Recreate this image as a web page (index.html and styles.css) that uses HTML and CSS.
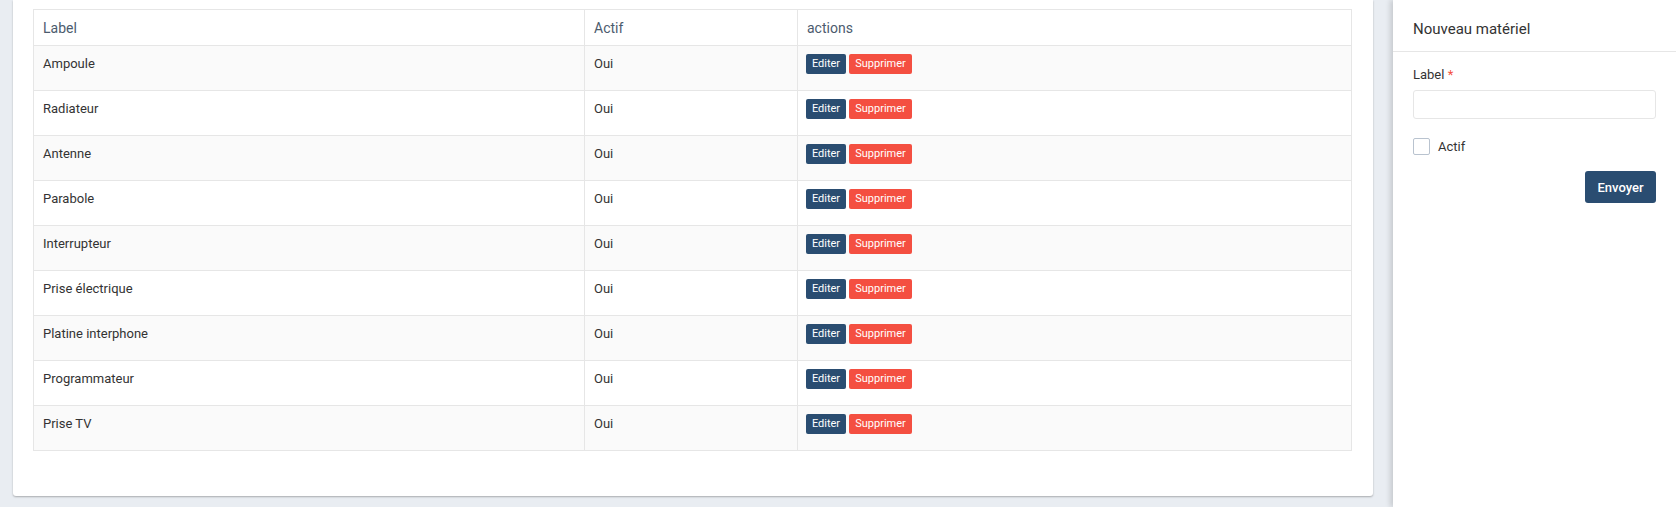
FILE: index.html
```html
<!DOCTYPE html>
<html lang="fr">
<head>
    <meta charset="UTF-8">
    <meta name="viewport" content="width=device-width, initial-scale=1.0">
    <title>Matériels</title>
    <link rel="stylesheet" href="styles.css">
</head>
<body>
    <div class="layout">
        <main class="main">
            <div class="card">
                <table class="list-table">
                    <thead>
                        <tr>
                            <th class="col-label">Label</th>
                            <th class="col-actif">Actif</th>
                            <th>actions</th>
                        </tr>
                    </thead>
                    <tbody>
                        <tr><td>Ampoule</td><td>Oui</td><td><button class="btn-edit">Editer</button><button class="btn-delete">Supprimer</button></td></tr>
                        <tr><td>Radiateur</td><td>Oui</td><td><button class="btn-edit">Editer</button><button class="btn-delete">Supprimer</button></td></tr>
                        <tr><td>Antenne</td><td>Oui</td><td><button class="btn-edit">Editer</button><button class="btn-delete">Supprimer</button></td></tr>
                        <tr><td>Parabole</td><td>Oui</td><td><button class="btn-edit">Editer</button><button class="btn-delete">Supprimer</button></td></tr>
                        <tr><td>Interrupteur</td><td>Oui</td><td><button class="btn-edit">Editer</button><button class="btn-delete">Supprimer</button></td></tr>
                        <tr><td>Prise électrique</td><td>Oui</td><td><button class="btn-edit">Editer</button><button class="btn-delete">Supprimer</button></td></tr>
                        <tr><td>Platine interphone</td><td>Oui</td><td><button class="btn-edit">Editer</button><button class="btn-delete">Supprimer</button></td></tr>
                        <tr><td>Programmateur</td><td>Oui</td><td><button class="btn-edit">Editer</button><button class="btn-delete">Supprimer</button></td></tr>
                        <tr><td>Prise TV</td><td>Oui</td><td><button class="btn-edit">Editer</button><button class="btn-delete">Supprimer</button></td></tr>
                    </tbody>
                </table>
            </div>
        </main>

        <aside class="side-panel">
            <h2 class="panel-title">Nouveau matériel</h2>
            <form class="panel-form" onsubmit="return false;">
                <label class="field-label" for="labelInput">Label <span class="required">*</span></label>
                <input type="text" id="labelInput" class="field-input">
                <label class="check-row">
                    <input type="checkbox" class="check-box">
                    <span>Actif</span>
                </label>
                <div class="form-actions">
                    <button type="submit" class="btn-submit">Envoyer</button>
                </div>
            </form>
        </aside>
    </div>
</body>
</html>
```

FILE: styles.css
```css
body {
    font-family: Roboto, "Liberation Sans", Arial, sans-serif;
    margin: 0;
    padding: 0;
    background-color: #e9edf2;
    color: #333;
    font-size: 13px;
    overflow: hidden;
}
.layout {
    display: flex;
    height: 507px;
}
.main {
    flex: 1;
    padding: 0 20px 0 13px;
}
.card {
    background-color: #fff;
    padding: 9px 21px 45px 20px;
    border-radius: 0 0 3px 3px;
    box-shadow: 0 1px 2px rgba(0, 0, 0, 0.28);
}
.list-table {
    width: 100%;
    border-collapse: collapse;
    border: 1px solid #e6e6e6;
}
.list-table th,
.list-table td {
    border-left: 1px solid #e6e6e6;
    text-align: left;
}
.list-table th {
    height: 35px;
    padding: 0 9px;
    font-size: 14px;
    font-weight: normal;
    color: #4c5b6e;
    border-bottom: 1px solid #e6e6e6;
}
.col-label {
    width: 532px;
}
.col-actif {
    width: 194px;
}
.list-table tbody tr {
    height: 45px;
}
.list-table td {
    padding: 8px 9px 0;
    vertical-align: top;
    line-height: 20px;
    border-bottom: 1px solid #e6e6e6;
}
.list-table td:last-child {
    padding-left: 8px;
}
.list-table tbody tr:nth-child(odd) {
    background-color: #fafafa;
}
.btn-edit,
.btn-delete {
    font-family: inherit;
    font-size: 11px;
    height: 20px;
    line-height: 20px;
    padding: 0 5px;
    border: none;
    border-radius: 2px;
    color: #fff;
    cursor: pointer;
    vertical-align: top;
}
.btn-edit {
    background-color: #2a4d71;
    width: 40px;
    margin-right: 3px;
}
.btn-delete {
    background-color: #f44f41;
    width: 63px;
}
.side-panel {
    width: 287px;
    background-color: #fff;
    box-shadow: -3px 0 5px rgba(0, 0, 0, 0.14);
}
.panel-title {
    margin: 0 4px 0 0;
    height: 52px;
    line-height: 59px;
    padding-left: 20px;
    font-size: 15px;
    font-weight: normal;
    color: #333;
    border-bottom: 1px solid #e6e6e6;
    box-sizing: border-box;
}
.panel-form {
    padding: 15px 24px 0 20px;
    display: flex;
    flex-direction: column;
}
.field-label {
    font-size: 13px;
    line-height: 16px;
    margin-bottom: 7px;
}
.required {
    color: #f44f41;
}
.field-input {
    height: 29px;
    box-sizing: border-box;
    border: 1px solid #e6e6e6;
    border-radius: 3px;
    outline: none;
    margin: 0;
}
.check-row {
    display: flex;
    align-items: center;
    gap: 8px;
    margin-top: 19px;
    font-size: 13px;
}
.check-box {
    appearance: none;
    width: 17px;
    height: 17px;
    margin: 0;
    border: 1px solid #b9c3cf;
    border-radius: 2px;
    background: #fff;
}
.form-actions {
    display: flex;
    justify-content: flex-end;
    margin-top: 16px;
}
.btn-submit {
    font-family: inherit;
    width: 71px;
    height: 32px;
    background-color: #2a4d71;
    color: #fff;
    border: none;
    border-radius: 3px;
    font-size: 13px;
    font-weight: 500;
    cursor: pointer;
}
```
